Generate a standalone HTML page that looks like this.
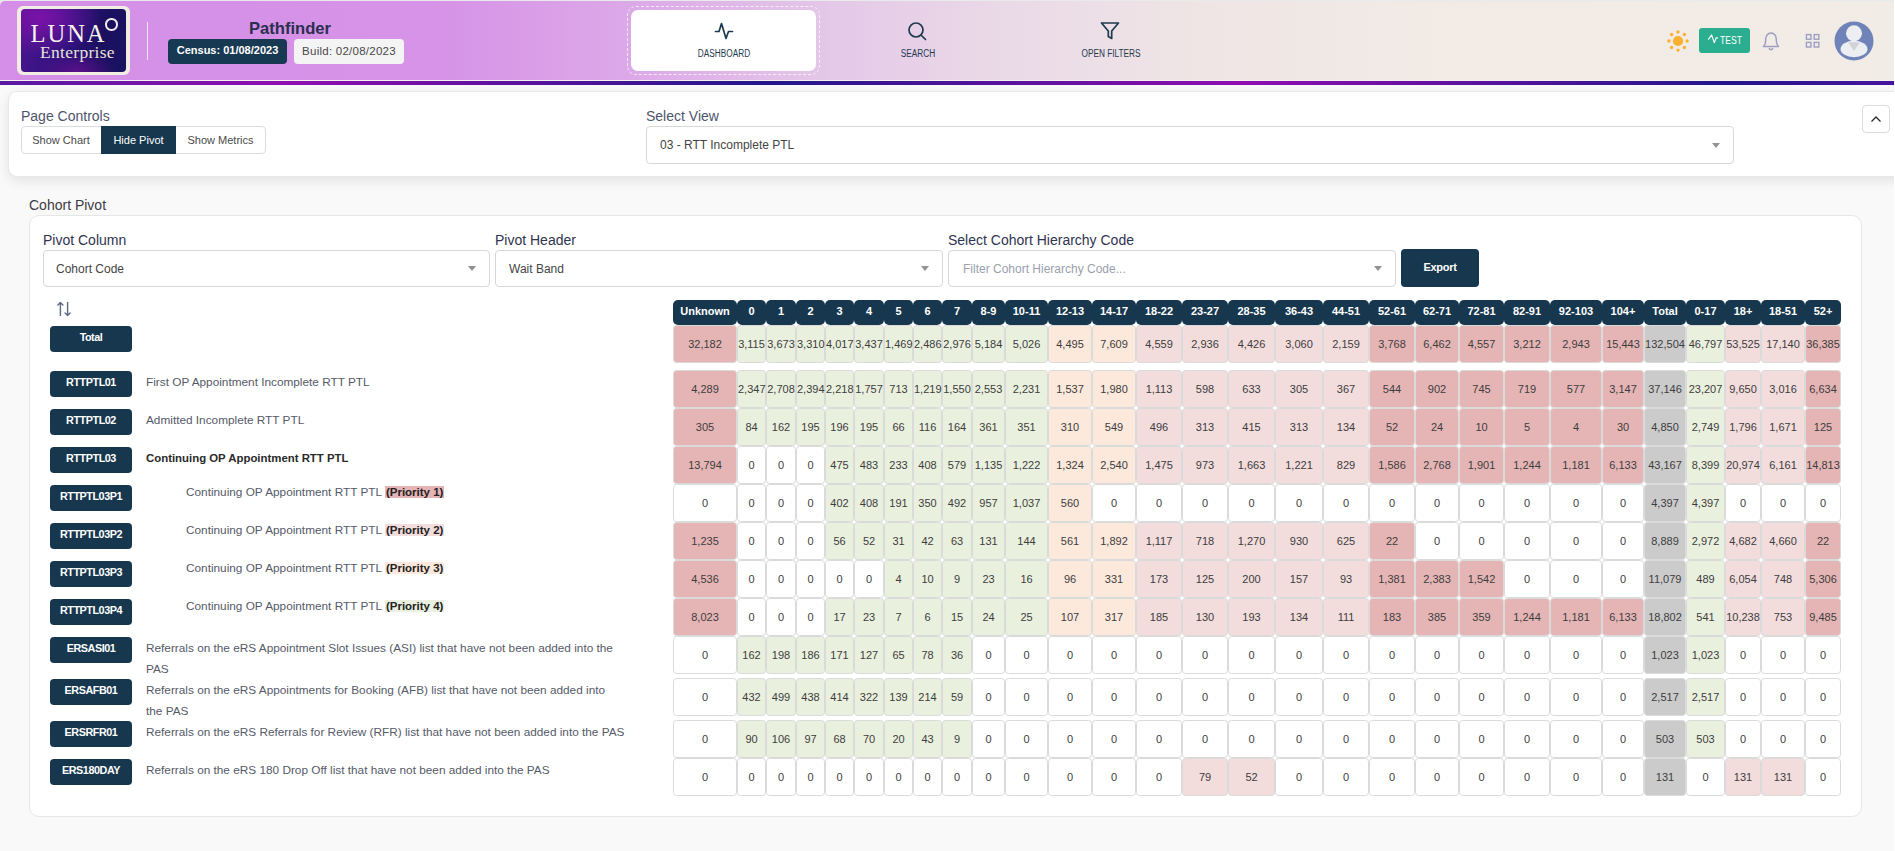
<!DOCTYPE html><html><head><meta charset="utf-8"><title>Pathfinder</title><style>
*{box-sizing:border-box;margin:0;padding:0}
html,body{width:1895px;height:851px;overflow:hidden}
body{background:#f9f9f9;font-family:"Liberation Sans",sans-serif;position:relative;color:#333}
.a{position:absolute}
#hdr{left:0;top:0;width:1894px;height:85px;background:#e9eaec}
#hbg{left:0;top:1px;width:1894px;height:79px;border-top-left-radius:5px;
 background:linear-gradient(90deg,#d48ee7 0px,#d794e7 450px,#dcaae8 640px,#e4c8e8 830px,#ead9e7 1000px,#efe5e5 1200px,#f1eae5 1400px,#f2ece6 1894px)}
#hline{left:0;top:80px;width:1894px;height:1px;background:#f6f2ee}
#hstrip{left:0;top:81px;width:1894px;height:4px;
 background:linear-gradient(90deg,#581aa2 0px,#900eb2 285px,#22168a 770px,#900eb2 1240px,#22168a 1725px,#4814a0 1894px)}
#rwhite{left:1894px;top:0;width:1px;height:851px;background:#fff}
.logo{left:17px;top:6px;width:113px;height:69px;border-radius:6px;background:#f2ede3}
.logoin{left:21px;top:9px;width:105px;height:63px;border-radius:4px;
 background:radial-gradient(ellipse 60px 40px at 20px 8px,#7a12a8 0%,rgba(122,18,168,0) 100%),
 radial-gradient(ellipse 40px 20px at 55px 62px,#5a108a 0%,rgba(90,16,138,0) 100%),
 linear-gradient(100deg,#4c1590 0%,#2a127a 45%,#1b1060 75%,#1a1260 100%)}
.luna{left:30.5px;top:19.4px;font-family:"Liberation Serif",serif;font-size:24.5px;color:#f6f1ea;letter-spacing:2px;line-height:30px}
.ent{left:40px;top:42.3px;font-family:"Liberation Serif",serif;font-size:17.5px;color:#eae0da;letter-spacing:0.3px;line-height:20px}
.ring{left:105px;top:18px;width:12.5px;height:12.5px;border:2px solid #f2ece6;border-radius:50%}
.vdiv{left:147px;top:22px;width:1px;height:38px;background:#f1e3f3}
.title{left:249px;top:18.7px;font-size:16.6px;font-weight:bold;color:#2b2f4f;line-height:20px}
.census{left:168px;top:39px;width:119px;height:25px;border-radius:4px;background:#173a52;color:#fff;font-size:11px;font-weight:bold;line-height:23.5px;text-align:center}
.build{left:294px;top:39px;width:110px;height:25px;border-radius:4px;background:#f4f4f4;color:#484848;font-size:11.5px;letter-spacing:0.25px;line-height:24.5px;text-align:center}
.navsel{left:627px;top:6px;width:193px;height:69px;border:1px dashed rgba(255,255,255,.7);border-radius:9px}
.navbox{left:631px;top:10px;width:185px;height:61px;background:#fff;border-radius:7px}
.navlbl{font-size:10px;color:#1d3a4e;line-height:12px;text-align:center;width:120px;transform:scaleX(.825)}
.ic{stroke:#1d3a4e;fill:none;stroke-width:1.7;stroke-linecap:round;stroke-linejoin:round}
.test{left:1699px;top:28px;width:51px;height:25px;border-radius:3px;background:#2aae8f;color:#fff;font-size:12px;line-height:25px}
.card{background:#fff;border-radius:9px}
.lbl{font-size:14px;color:#4e546c;line-height:16px}
.btng{left:21px;top:126px;height:28px;border:1px solid #dcdcdc;border-radius:4px;background:#fff}
.btn{top:126px;height:28px;font-size:11px;line-height:28px;text-align:center;color:#4a4a4a}
.sel{background:#fff;border:1px solid #d8d8d8;border-radius:4px;font-size:12px;color:#444}
.caret{width:0;height:0;border-left:4.5px solid transparent;border-right:4.5px solid transparent;border-top:5px solid #929292;margin-left:.8px;margin-top:.4px}
.cell{position:absolute;border:1px solid #dadada;border-radius:3.5px;font-size:11px;text-align:center;color:#3d3d3d;background:#fff;white-space:nowrap;overflow:visible}
.hc{position:absolute;top:300px;height:25px;border-radius:5px;background:#17374e;color:#fff;font-weight:bold;font-size:11px;line-height:23px;text-align:center;white-space:nowrap}
.r{background:#e5b5b5}.g{background:#eaf0de}.p{background:#fde9dc}.l{background:#f2dcdc}.t{background:#cbcbcb}.w{background:#fff}
.badge{position:absolute;left:50px;width:82px;height:26px;border-radius:4px;background:#17374e;color:#fff;font-size:10.8px;font-weight:bold;line-height:23px;text-align:center;letter-spacing:-0.45px}
.desc{position:absolute;font-size:11.8px;color:#555a68;line-height:21px;white-space:nowrap}
.hl{font-weight:bold;color:#222;padding:0 1px;font-size:11.5px}
</style></head><body>
<div id="hdr" class="a"></div><div id="hbg" class="a"></div><div id="hline" class="a"></div><div id="hstrip" class="a"></div>
<div class="a logo"></div><div class="a logoin"></div><div class="a luna">LUNA</div><div class="a ring"></div><div class="a ent">Enterprise</div>
<div class="a vdiv"></div>
<div class="a title">Pathfinder</div>
<div class="a census">Census: 01/08/2023</div><div class="a build">Build: 02/08/2023</div>
<div class="a navsel"></div><div class="a navbox"></div>
<svg class="a" style="left:714px;top:22px" width="20" height="18" viewBox="0 0 20 18"><path class="ic" d="M1.5 9.5h3.5l2.5-8 4.5 15 2.5-7h4"/></svg>
<div class="a navlbl" style="left:664px;top:47.6px">DASHBOARD</div>
<svg class="a" style="left:907px;top:21px" width="20" height="20" viewBox="0 0 20 20"><circle class="ic" cx="9" cy="9" r="7"/><path class="ic" d="M14 14l4.5 4.5"/></svg>
<div class="a navlbl" style="left:857.5px;top:47.6px">SEARCH</div>
<svg class="a" style="left:1100px;top:21px" width="20" height="20" viewBox="0 0 20 20"><path class="ic" d="M1.5 2h17l-6.8 8v7.5l-3.4-2v-5.5z"/></svg>
<div class="a navlbl" style="left:1050.5px;top:47.6px">OPEN FILTERS</div>
<svg class="a" style="left:1665px;top:27.6px" width="26" height="26" viewBox="0 0 26 26"><circle cx="13" cy="13" r="5.1" fill="#fbb02d"/><circle cx="13.00" cy="3.90" r="1.7" fill="#fbb02d"/><circle cx="19.43" cy="6.57" r="1.7" fill="#fbb02d"/><circle cx="22.10" cy="13.00" r="1.7" fill="#fbb02d"/><circle cx="19.43" cy="19.43" r="1.7" fill="#fbb02d"/><circle cx="13.00" cy="22.10" r="1.7" fill="#fbb02d"/><circle cx="6.57" cy="19.43" r="1.7" fill="#fbb02d"/><circle cx="3.90" cy="13.00" r="1.7" fill="#fbb02d"/><circle cx="6.57" cy="6.57" r="1.7" fill="#fbb02d"/></svg>
<div class="a test"><svg class="a" style="left:8.5px;top:5.5px" width="11" height="10" viewBox="0 0 11 10"><path d="M0.6 5.2L3.6 0.9 6.3 8.6 8.2 3.8H9.6" stroke="#fff" stroke-width="1.15" fill="none" stroke-linejoin="round" stroke-linecap="round"/></svg><span class="a" style="left:21px;top:0;font-size:10.8px;transform:scaleX(.8);transform-origin:0 0">TEST</span></div>
<svg class="a" style="left:1761px;top:30.6px" width="20" height="22" viewBox="0 0 20 22"><path d="M2.5 15.5h15c-1.6-1.6-2.2-3-2.2-6V8c0-3.3-2.3-6-5.3-6S4.7 4.700 4.700 8v1.5c0 3-.6 4.400-2.200 6z" stroke="#9c9fc2" stroke-width="1.5" fill="none" stroke-linejoin="round"/><path d="M8.300 17.600a1.800 1.700 0 0 0 3.400 0" stroke="#9c9fc2" stroke-width="1.5" fill="none" stroke-linecap="round"/></svg>
<svg class="a" style="left:1804px;top:32px" width="18" height="18" viewBox="0 0 18 18"><g stroke="#9c9fc2" stroke-width="1.4" fill="none"><rect x="2.4" y="2.6" width="4.6" height="4.6"/><rect x="10.2" y="2.6" width="4.6" height="4.6"/><rect x="2.4" y="10.4" width="4.6" height="4.6"/><rect x="10.2" y="10.4" width="4.6" height="4.6"/></g></svg>
<svg class="a" style="left:1834px;top:21px" width="40" height="40" viewBox="0 0 40 40"><defs><clipPath id="cc"><circle cx="20" cy="20" r="19.3"/></clipPath></defs><circle cx="20" cy="20" r="19.5" fill="#6f83b9"/><g clip-path="url(#cc)"><ellipse cx="20" cy="28" rx="13.5" ry="8.3" fill="#edeef2"/><path d="M14.1 21.2h11.8l-5.9 8.8z" fill="#d2d3d6"/><circle cx="20" cy="12.3" r="8" fill="#edeef2"/></g></svg>
<div class="a card" style="left:8px;top:91px;width:1900px;height:86px;border:1px solid #e8e8e8;box-shadow:0 4px 12px rgba(0,0,0,0.09)"></div>
<div class="a lbl" style="left:21px;top:108px">Page Controls</div>
<div class="a btng" style="width:245px"></div>
<div class="a btn" style="left:21px;width:80px">Show Chart</div>
<div class="a btn" style="left:101px;width:75px;background:#17374e;color:#fff">Hide Pivot</div>
<div class="a btn" style="left:176px;width:89px">Show Metrics</div>
<div class="a lbl" style="left:646px;top:108px">Select View</div>
<div class="a sel" style="left:646px;top:126px;width:1088px;height:38px"><span class="a" style="left:13px;top:11px">03 - RTT Incomplete PTL</span></div>
<div class="a caret" style="left:1711px;top:143px"></div>
<div class="a" style="left:1862px;top:105px;width:28px;height:28px;border:1px solid #dcdcdc;border-radius:4px;background:#fff"><svg class="a" style="left:6.5px;top:9px" width="12" height="8" viewBox="0 0 12 8"><path d="M1.5 6.5l4.5-4.5 4.5 4.5" stroke="#2a2a2a" stroke-width="1.25" fill="none"/></svg></div>
<div class="a" style="left:29px;top:197px;font-size:14px;color:#3c3c44;line-height:16px">Cohort Pivot</div>
<div class="a card" style="left:29px;top:215px;width:1833px;height:602px;border:1px solid #e6e6e6;border-radius:10px"></div>
<div class="a lbl" style="left:43px;top:232px;color:#2f3450">Pivot Column</div>
<div class="a sel" style="left:43px;top:250px;width:447px;height:37px"><span class="a" style="left:12px;top:11px">Cohort Code</span></div>
<div class="a caret" style="left:467px;top:266px"></div>
<div class="a lbl" style="left:495px;top:232px;color:#2f3450">Pivot Header</div>
<div class="a sel" style="left:495px;top:250px;width:448px;height:37px"><span class="a" style="left:13px;top:11px">Wait Band</span></div>
<div class="a caret" style="left:920px;top:266px"></div>
<div class="a lbl" style="left:948px;top:232px;color:#2f3450">Select Cohort Hierarchy Code</div>
<div class="a sel" style="left:948px;top:250px;width:448px;height:37px"><span class="a" style="left:14px;top:11px;color:#9aa0ae">Filter Cohort Hierarchy Code...</span></div>
<div class="a caret" style="left:1373px;top:266px"></div>
<div class="a" style="left:1401px;top:249px;width:78px;height:38px;border-radius:4px;background:#17374e;color:#fff;font-size:11px;font-weight:bold;letter-spacing:-0.3px;line-height:37px;text-align:center">Export</div>
<svg class="a" style="left:56px;top:301px" width="16" height="17" viewBox="0 0 16 17"><g stroke="#5b6a85" stroke-width="1.4" fill="none" stroke-linecap="round" stroke-linejoin="round"><path d="M4.4 14.4V1.4M1.9 3.9L4.4 1.4l2.5 2.5"/><path d="M11.6 1.5v13M9.1 12l2.5 2.5 2.5-2.5"/></g></svg>
<div class="hc" style="left:673px;width:64px">Unknown</div>
<div class="hc" style="left:737px;width:29px">0</div>
<div class="hc" style="left:766px;width:30px">1</div>
<div class="hc" style="left:796px;width:29px">2</div>
<div class="hc" style="left:825px;width:29px">3</div>
<div class="hc" style="left:854px;width:30px">4</div>
<div class="hc" style="left:884px;width:29px">5</div>
<div class="hc" style="left:913px;width:29px">6</div>
<div class="hc" style="left:942px;width:30px">7</div>
<div class="hc" style="left:972px;width:33px">8-9</div>
<div class="hc" style="left:1005px;width:43px">10-11</div>
<div class="hc" style="left:1048px;width:44px">12-13</div>
<div class="hc" style="left:1092px;width:44px">14-17</div>
<div class="hc" style="left:1136px;width:46px">18-22</div>
<div class="hc" style="left:1182px;width:46px">23-27</div>
<div class="hc" style="left:1228px;width:47px">28-35</div>
<div class="hc" style="left:1275px;width:48px">36-43</div>
<div class="hc" style="left:1323px;width:46px">44-51</div>
<div class="hc" style="left:1369px;width:46px">52-61</div>
<div class="hc" style="left:1415px;width:44px">62-71</div>
<div class="hc" style="left:1459px;width:45px">72-81</div>
<div class="hc" style="left:1504px;width:46px">82-91</div>
<div class="hc" style="left:1550px;width:52px">92-103</div>
<div class="hc" style="left:1602px;width:42px">104+</div>
<div class="hc" style="left:1644px;width:42px">Total</div>
<div class="hc" style="left:1686px;width:39px">0-17</div>
<div class="hc" style="left:1725px;width:36px">18+</div>
<div class="hc" style="left:1761px;width:44px">18-51</div>
<div class="hc" style="left:1805px;width:36px">52+</div>
<div class="cell r" style="left:673px;top:325.0px;width:64px;height:38.0px;line-height:36.0px">32,182</div>
<div class="cell g" style="left:737px;top:325.0px;width:29px;height:38.0px;line-height:36.0px">3,115</div>
<div class="cell g" style="left:766px;top:325.0px;width:30px;height:38.0px;line-height:36.0px">3,673</div>
<div class="cell g" style="left:796px;top:325.0px;width:29px;height:38.0px;line-height:36.0px">3,310</div>
<div class="cell g" style="left:825px;top:325.0px;width:29px;height:38.0px;line-height:36.0px">4,017</div>
<div class="cell g" style="left:854px;top:325.0px;width:30px;height:38.0px;line-height:36.0px">3,437</div>
<div class="cell g" style="left:884px;top:325.0px;width:29px;height:38.0px;line-height:36.0px">1,469</div>
<div class="cell g" style="left:913px;top:325.0px;width:29px;height:38.0px;line-height:36.0px">2,486</div>
<div class="cell g" style="left:942px;top:325.0px;width:30px;height:38.0px;line-height:36.0px">2,976</div>
<div class="cell g" style="left:972px;top:325.0px;width:33px;height:38.0px;line-height:36.0px">5,184</div>
<div class="cell g" style="left:1005px;top:325.0px;width:43px;height:38.0px;line-height:36.0px">5,026</div>
<div class="cell p" style="left:1048px;top:325.0px;width:44px;height:38.0px;line-height:36.0px">4,495</div>
<div class="cell p" style="left:1092px;top:325.0px;width:44px;height:38.0px;line-height:36.0px">7,609</div>
<div class="cell l" style="left:1136px;top:325.0px;width:46px;height:38.0px;line-height:36.0px">4,559</div>
<div class="cell l" style="left:1182px;top:325.0px;width:46px;height:38.0px;line-height:36.0px">2,936</div>
<div class="cell l" style="left:1228px;top:325.0px;width:47px;height:38.0px;line-height:36.0px">4,426</div>
<div class="cell l" style="left:1275px;top:325.0px;width:48px;height:38.0px;line-height:36.0px">3,060</div>
<div class="cell l" style="left:1323px;top:325.0px;width:46px;height:38.0px;line-height:36.0px">2,159</div>
<div class="cell r" style="left:1369px;top:325.0px;width:46px;height:38.0px;line-height:36.0px">3,768</div>
<div class="cell r" style="left:1415px;top:325.0px;width:44px;height:38.0px;line-height:36.0px">6,462</div>
<div class="cell r" style="left:1459px;top:325.0px;width:45px;height:38.0px;line-height:36.0px">4,557</div>
<div class="cell r" style="left:1504px;top:325.0px;width:46px;height:38.0px;line-height:36.0px">3,212</div>
<div class="cell r" style="left:1550px;top:325.0px;width:52px;height:38.0px;line-height:36.0px">2,943</div>
<div class="cell r" style="left:1602px;top:325.0px;width:42px;height:38.0px;line-height:36.0px">15,443</div>
<div class="cell t" style="left:1644px;top:325.0px;width:42px;height:38.0px;line-height:36.0px">132,504</div>
<div class="cell g" style="left:1686px;top:325.0px;width:39px;height:38.0px;line-height:36.0px">46,797</div>
<div class="cell l" style="left:1725px;top:325.0px;width:36px;height:38.0px;line-height:36.0px">53,525</div>
<div class="cell l" style="left:1761px;top:325.0px;width:44px;height:38.0px;line-height:36.0px">17,140</div>
<div class="cell r" style="left:1805px;top:325.0px;width:36px;height:38.0px;line-height:36.0px">36,385</div>
<div class="badge" style="top:326.0px">Total</div>
<div class="cell r" style="left:673px;top:370.0px;width:64px;height:38.0px;line-height:36.0px">4,289</div>
<div class="cell g" style="left:737px;top:370.0px;width:29px;height:38.0px;line-height:36.0px">2,347</div>
<div class="cell g" style="left:766px;top:370.0px;width:30px;height:38.0px;line-height:36.0px">2,708</div>
<div class="cell g" style="left:796px;top:370.0px;width:29px;height:38.0px;line-height:36.0px">2,394</div>
<div class="cell g" style="left:825px;top:370.0px;width:29px;height:38.0px;line-height:36.0px">2,218</div>
<div class="cell g" style="left:854px;top:370.0px;width:30px;height:38.0px;line-height:36.0px">1,757</div>
<div class="cell g" style="left:884px;top:370.0px;width:29px;height:38.0px;line-height:36.0px">713</div>
<div class="cell g" style="left:913px;top:370.0px;width:29px;height:38.0px;line-height:36.0px">1,219</div>
<div class="cell g" style="left:942px;top:370.0px;width:30px;height:38.0px;line-height:36.0px">1,550</div>
<div class="cell g" style="left:972px;top:370.0px;width:33px;height:38.0px;line-height:36.0px">2,553</div>
<div class="cell g" style="left:1005px;top:370.0px;width:43px;height:38.0px;line-height:36.0px">2,231</div>
<div class="cell p" style="left:1048px;top:370.0px;width:44px;height:38.0px;line-height:36.0px">1,537</div>
<div class="cell p" style="left:1092px;top:370.0px;width:44px;height:38.0px;line-height:36.0px">1,980</div>
<div class="cell l" style="left:1136px;top:370.0px;width:46px;height:38.0px;line-height:36.0px">1,113</div>
<div class="cell l" style="left:1182px;top:370.0px;width:46px;height:38.0px;line-height:36.0px">598</div>
<div class="cell l" style="left:1228px;top:370.0px;width:47px;height:38.0px;line-height:36.0px">633</div>
<div class="cell l" style="left:1275px;top:370.0px;width:48px;height:38.0px;line-height:36.0px">305</div>
<div class="cell l" style="left:1323px;top:370.0px;width:46px;height:38.0px;line-height:36.0px">367</div>
<div class="cell r" style="left:1369px;top:370.0px;width:46px;height:38.0px;line-height:36.0px">544</div>
<div class="cell r" style="left:1415px;top:370.0px;width:44px;height:38.0px;line-height:36.0px">902</div>
<div class="cell r" style="left:1459px;top:370.0px;width:45px;height:38.0px;line-height:36.0px">745</div>
<div class="cell r" style="left:1504px;top:370.0px;width:46px;height:38.0px;line-height:36.0px">719</div>
<div class="cell r" style="left:1550px;top:370.0px;width:52px;height:38.0px;line-height:36.0px">577</div>
<div class="cell r" style="left:1602px;top:370.0px;width:42px;height:38.0px;line-height:36.0px">3,147</div>
<div class="cell t" style="left:1644px;top:370.0px;width:42px;height:38.0px;line-height:36.0px">37,146</div>
<div class="cell g" style="left:1686px;top:370.0px;width:39px;height:38.0px;line-height:36.0px">23,207</div>
<div class="cell l" style="left:1725px;top:370.0px;width:36px;height:38.0px;line-height:36.0px">9,650</div>
<div class="cell l" style="left:1761px;top:370.0px;width:44px;height:38.0px;line-height:36.0px">3,016</div>
<div class="cell r" style="left:1805px;top:370.0px;width:36px;height:38.0px;line-height:36.0px">6,634</div>
<div class="badge" style="top:371.0px">RTTPTL01</div>
<div class="desc" style="left:146px;top:372.0px">First OP Appointment Incomplete RTT PTL</div>
<div class="cell r" style="left:673px;top:408.0px;width:64px;height:38.0px;line-height:36.0px">305</div>
<div class="cell g" style="left:737px;top:408.0px;width:29px;height:38.0px;line-height:36.0px">84</div>
<div class="cell g" style="left:766px;top:408.0px;width:30px;height:38.0px;line-height:36.0px">162</div>
<div class="cell g" style="left:796px;top:408.0px;width:29px;height:38.0px;line-height:36.0px">195</div>
<div class="cell g" style="left:825px;top:408.0px;width:29px;height:38.0px;line-height:36.0px">196</div>
<div class="cell g" style="left:854px;top:408.0px;width:30px;height:38.0px;line-height:36.0px">195</div>
<div class="cell g" style="left:884px;top:408.0px;width:29px;height:38.0px;line-height:36.0px">66</div>
<div class="cell g" style="left:913px;top:408.0px;width:29px;height:38.0px;line-height:36.0px">116</div>
<div class="cell g" style="left:942px;top:408.0px;width:30px;height:38.0px;line-height:36.0px">164</div>
<div class="cell g" style="left:972px;top:408.0px;width:33px;height:38.0px;line-height:36.0px">361</div>
<div class="cell g" style="left:1005px;top:408.0px;width:43px;height:38.0px;line-height:36.0px">351</div>
<div class="cell p" style="left:1048px;top:408.0px;width:44px;height:38.0px;line-height:36.0px">310</div>
<div class="cell p" style="left:1092px;top:408.0px;width:44px;height:38.0px;line-height:36.0px">549</div>
<div class="cell l" style="left:1136px;top:408.0px;width:46px;height:38.0px;line-height:36.0px">496</div>
<div class="cell l" style="left:1182px;top:408.0px;width:46px;height:38.0px;line-height:36.0px">313</div>
<div class="cell l" style="left:1228px;top:408.0px;width:47px;height:38.0px;line-height:36.0px">415</div>
<div class="cell l" style="left:1275px;top:408.0px;width:48px;height:38.0px;line-height:36.0px">313</div>
<div class="cell l" style="left:1323px;top:408.0px;width:46px;height:38.0px;line-height:36.0px">134</div>
<div class="cell r" style="left:1369px;top:408.0px;width:46px;height:38.0px;line-height:36.0px">52</div>
<div class="cell r" style="left:1415px;top:408.0px;width:44px;height:38.0px;line-height:36.0px">24</div>
<div class="cell r" style="left:1459px;top:408.0px;width:45px;height:38.0px;line-height:36.0px">10</div>
<div class="cell r" style="left:1504px;top:408.0px;width:46px;height:38.0px;line-height:36.0px">5</div>
<div class="cell r" style="left:1550px;top:408.0px;width:52px;height:38.0px;line-height:36.0px">4</div>
<div class="cell r" style="left:1602px;top:408.0px;width:42px;height:38.0px;line-height:36.0px">30</div>
<div class="cell t" style="left:1644px;top:408.0px;width:42px;height:38.0px;line-height:36.0px">4,850</div>
<div class="cell g" style="left:1686px;top:408.0px;width:39px;height:38.0px;line-height:36.0px">2,749</div>
<div class="cell l" style="left:1725px;top:408.0px;width:36px;height:38.0px;line-height:36.0px">1,796</div>
<div class="cell l" style="left:1761px;top:408.0px;width:44px;height:38.0px;line-height:36.0px">1,671</div>
<div class="cell r" style="left:1805px;top:408.0px;width:36px;height:38.0px;line-height:36.0px">125</div>
<div class="badge" style="top:409.0px">RTTPTL02</div>
<div class="desc" style="left:146px;top:410.0px">Admitted Incomplete RTT PTL</div>
<div class="cell r" style="left:673px;top:446.0px;width:64px;height:38.0px;line-height:36.0px">13,794</div>
<div class="cell w" style="left:737px;top:446.0px;width:29px;height:38.0px;line-height:36.0px">0</div>
<div class="cell w" style="left:766px;top:446.0px;width:30px;height:38.0px;line-height:36.0px">0</div>
<div class="cell w" style="left:796px;top:446.0px;width:29px;height:38.0px;line-height:36.0px">0</div>
<div class="cell g" style="left:825px;top:446.0px;width:29px;height:38.0px;line-height:36.0px">475</div>
<div class="cell g" style="left:854px;top:446.0px;width:30px;height:38.0px;line-height:36.0px">483</div>
<div class="cell g" style="left:884px;top:446.0px;width:29px;height:38.0px;line-height:36.0px">233</div>
<div class="cell g" style="left:913px;top:446.0px;width:29px;height:38.0px;line-height:36.0px">408</div>
<div class="cell g" style="left:942px;top:446.0px;width:30px;height:38.0px;line-height:36.0px">579</div>
<div class="cell g" style="left:972px;top:446.0px;width:33px;height:38.0px;line-height:36.0px">1,135</div>
<div class="cell g" style="left:1005px;top:446.0px;width:43px;height:38.0px;line-height:36.0px">1,222</div>
<div class="cell p" style="left:1048px;top:446.0px;width:44px;height:38.0px;line-height:36.0px">1,324</div>
<div class="cell p" style="left:1092px;top:446.0px;width:44px;height:38.0px;line-height:36.0px">2,540</div>
<div class="cell l" style="left:1136px;top:446.0px;width:46px;height:38.0px;line-height:36.0px">1,475</div>
<div class="cell l" style="left:1182px;top:446.0px;width:46px;height:38.0px;line-height:36.0px">973</div>
<div class="cell l" style="left:1228px;top:446.0px;width:47px;height:38.0px;line-height:36.0px">1,663</div>
<div class="cell l" style="left:1275px;top:446.0px;width:48px;height:38.0px;line-height:36.0px">1,221</div>
<div class="cell l" style="left:1323px;top:446.0px;width:46px;height:38.0px;line-height:36.0px">829</div>
<div class="cell r" style="left:1369px;top:446.0px;width:46px;height:38.0px;line-height:36.0px">1,586</div>
<div class="cell r" style="left:1415px;top:446.0px;width:44px;height:38.0px;line-height:36.0px">2,768</div>
<div class="cell r" style="left:1459px;top:446.0px;width:45px;height:38.0px;line-height:36.0px">1,901</div>
<div class="cell r" style="left:1504px;top:446.0px;width:46px;height:38.0px;line-height:36.0px">1,244</div>
<div class="cell r" style="left:1550px;top:446.0px;width:52px;height:38.0px;line-height:36.0px">1,181</div>
<div class="cell r" style="left:1602px;top:446.0px;width:42px;height:38.0px;line-height:36.0px">6,133</div>
<div class="cell t" style="left:1644px;top:446.0px;width:42px;height:38.0px;line-height:36.0px">43,167</div>
<div class="cell g" style="left:1686px;top:446.0px;width:39px;height:38.0px;line-height:36.0px">8,399</div>
<div class="cell l" style="left:1725px;top:446.0px;width:36px;height:38.0px;line-height:36.0px">20,974</div>
<div class="cell l" style="left:1761px;top:446.0px;width:44px;height:38.0px;line-height:36.0px">6,161</div>
<div class="cell r" style="left:1805px;top:446.0px;width:36px;height:38.0px;line-height:36.0px">14,813</div>
<div class="badge" style="top:447.0px">RTTPTL03</div>
<div class="desc" style="left:146px;top:448.0px;font-weight:bold;color:#2a2a2a;font-size:11.4px">Continuing OP Appointment RTT PTL</div>
<div class="cell w" style="left:673px;top:484.0px;width:64px;height:38.0px;line-height:36.0px">0</div>
<div class="cell w" style="left:737px;top:484.0px;width:29px;height:38.0px;line-height:36.0px">0</div>
<div class="cell w" style="left:766px;top:484.0px;width:30px;height:38.0px;line-height:36.0px">0</div>
<div class="cell w" style="left:796px;top:484.0px;width:29px;height:38.0px;line-height:36.0px">0</div>
<div class="cell g" style="left:825px;top:484.0px;width:29px;height:38.0px;line-height:36.0px">402</div>
<div class="cell g" style="left:854px;top:484.0px;width:30px;height:38.0px;line-height:36.0px">408</div>
<div class="cell g" style="left:884px;top:484.0px;width:29px;height:38.0px;line-height:36.0px">191</div>
<div class="cell g" style="left:913px;top:484.0px;width:29px;height:38.0px;line-height:36.0px">350</div>
<div class="cell g" style="left:942px;top:484.0px;width:30px;height:38.0px;line-height:36.0px">492</div>
<div class="cell g" style="left:972px;top:484.0px;width:33px;height:38.0px;line-height:36.0px">957</div>
<div class="cell g" style="left:1005px;top:484.0px;width:43px;height:38.0px;line-height:36.0px">1,037</div>
<div class="cell p" style="left:1048px;top:484.0px;width:44px;height:38.0px;line-height:36.0px">560</div>
<div class="cell w" style="left:1092px;top:484.0px;width:44px;height:38.0px;line-height:36.0px">0</div>
<div class="cell w" style="left:1136px;top:484.0px;width:46px;height:38.0px;line-height:36.0px">0</div>
<div class="cell w" style="left:1182px;top:484.0px;width:46px;height:38.0px;line-height:36.0px">0</div>
<div class="cell w" style="left:1228px;top:484.0px;width:47px;height:38.0px;line-height:36.0px">0</div>
<div class="cell w" style="left:1275px;top:484.0px;width:48px;height:38.0px;line-height:36.0px">0</div>
<div class="cell w" style="left:1323px;top:484.0px;width:46px;height:38.0px;line-height:36.0px">0</div>
<div class="cell w" style="left:1369px;top:484.0px;width:46px;height:38.0px;line-height:36.0px">0</div>
<div class="cell w" style="left:1415px;top:484.0px;width:44px;height:38.0px;line-height:36.0px">0</div>
<div class="cell w" style="left:1459px;top:484.0px;width:45px;height:38.0px;line-height:36.0px">0</div>
<div class="cell w" style="left:1504px;top:484.0px;width:46px;height:38.0px;line-height:36.0px">0</div>
<div class="cell w" style="left:1550px;top:484.0px;width:52px;height:38.0px;line-height:36.0px">0</div>
<div class="cell w" style="left:1602px;top:484.0px;width:42px;height:38.0px;line-height:36.0px">0</div>
<div class="cell t" style="left:1644px;top:484.0px;width:42px;height:38.0px;line-height:36.0px">4,397</div>
<div class="cell g" style="left:1686px;top:484.0px;width:39px;height:38.0px;line-height:36.0px">4,397</div>
<div class="cell w" style="left:1725px;top:484.0px;width:36px;height:38.0px;line-height:36.0px">0</div>
<div class="cell w" style="left:1761px;top:484.0px;width:44px;height:38.0px;line-height:36.0px">0</div>
<div class="cell w" style="left:1805px;top:484.0px;width:36px;height:38.0px;line-height:36.0px">0</div>
<div class="badge" style="top:485.0px">RTTPTL03P1</div>
<div class="desc" style="left:186px;top:482.0px">Continuing OP Appointment RTT PTL <span class="hl" style="background:#e5b4b4">(Priority 1)</span></div>
<div class="cell r" style="left:673px;top:522.0px;width:64px;height:38.0px;line-height:36.0px">1,235</div>
<div class="cell w" style="left:737px;top:522.0px;width:29px;height:38.0px;line-height:36.0px">0</div>
<div class="cell w" style="left:766px;top:522.0px;width:30px;height:38.0px;line-height:36.0px">0</div>
<div class="cell w" style="left:796px;top:522.0px;width:29px;height:38.0px;line-height:36.0px">0</div>
<div class="cell g" style="left:825px;top:522.0px;width:29px;height:38.0px;line-height:36.0px">56</div>
<div class="cell g" style="left:854px;top:522.0px;width:30px;height:38.0px;line-height:36.0px">52</div>
<div class="cell g" style="left:884px;top:522.0px;width:29px;height:38.0px;line-height:36.0px">31</div>
<div class="cell g" style="left:913px;top:522.0px;width:29px;height:38.0px;line-height:36.0px">42</div>
<div class="cell g" style="left:942px;top:522.0px;width:30px;height:38.0px;line-height:36.0px">63</div>
<div class="cell g" style="left:972px;top:522.0px;width:33px;height:38.0px;line-height:36.0px">131</div>
<div class="cell g" style="left:1005px;top:522.0px;width:43px;height:38.0px;line-height:36.0px">144</div>
<div class="cell p" style="left:1048px;top:522.0px;width:44px;height:38.0px;line-height:36.0px">561</div>
<div class="cell p" style="left:1092px;top:522.0px;width:44px;height:38.0px;line-height:36.0px">1,892</div>
<div class="cell l" style="left:1136px;top:522.0px;width:46px;height:38.0px;line-height:36.0px">1,117</div>
<div class="cell l" style="left:1182px;top:522.0px;width:46px;height:38.0px;line-height:36.0px">718</div>
<div class="cell l" style="left:1228px;top:522.0px;width:47px;height:38.0px;line-height:36.0px">1,270</div>
<div class="cell l" style="left:1275px;top:522.0px;width:48px;height:38.0px;line-height:36.0px">930</div>
<div class="cell l" style="left:1323px;top:522.0px;width:46px;height:38.0px;line-height:36.0px">625</div>
<div class="cell r" style="left:1369px;top:522.0px;width:46px;height:38.0px;line-height:36.0px">22</div>
<div class="cell w" style="left:1415px;top:522.0px;width:44px;height:38.0px;line-height:36.0px">0</div>
<div class="cell w" style="left:1459px;top:522.0px;width:45px;height:38.0px;line-height:36.0px">0</div>
<div class="cell w" style="left:1504px;top:522.0px;width:46px;height:38.0px;line-height:36.0px">0</div>
<div class="cell w" style="left:1550px;top:522.0px;width:52px;height:38.0px;line-height:36.0px">0</div>
<div class="cell w" style="left:1602px;top:522.0px;width:42px;height:38.0px;line-height:36.0px">0</div>
<div class="cell t" style="left:1644px;top:522.0px;width:42px;height:38.0px;line-height:36.0px">8,889</div>
<div class="cell g" style="left:1686px;top:522.0px;width:39px;height:38.0px;line-height:36.0px">2,972</div>
<div class="cell l" style="left:1725px;top:522.0px;width:36px;height:38.0px;line-height:36.0px">4,682</div>
<div class="cell l" style="left:1761px;top:522.0px;width:44px;height:38.0px;line-height:36.0px">4,660</div>
<div class="cell r" style="left:1805px;top:522.0px;width:36px;height:38.0px;line-height:36.0px">22</div>
<div class="badge" style="top:523.0px">RTTPTL03P2</div>
<div class="desc" style="left:186px;top:520.0px">Continuing OP Appointment RTT PTL <span class="hl" style="background:#f2dcdc">(Priority 2)</span></div>
<div class="cell r" style="left:673px;top:560.0px;width:64px;height:38.0px;line-height:36.0px">4,536</div>
<div class="cell w" style="left:737px;top:560.0px;width:29px;height:38.0px;line-height:36.0px">0</div>
<div class="cell w" style="left:766px;top:560.0px;width:30px;height:38.0px;line-height:36.0px">0</div>
<div class="cell w" style="left:796px;top:560.0px;width:29px;height:38.0px;line-height:36.0px">0</div>
<div class="cell w" style="left:825px;top:560.0px;width:29px;height:38.0px;line-height:36.0px">0</div>
<div class="cell w" style="left:854px;top:560.0px;width:30px;height:38.0px;line-height:36.0px">0</div>
<div class="cell g" style="left:884px;top:560.0px;width:29px;height:38.0px;line-height:36.0px">4</div>
<div class="cell g" style="left:913px;top:560.0px;width:29px;height:38.0px;line-height:36.0px">10</div>
<div class="cell g" style="left:942px;top:560.0px;width:30px;height:38.0px;line-height:36.0px">9</div>
<div class="cell g" style="left:972px;top:560.0px;width:33px;height:38.0px;line-height:36.0px">23</div>
<div class="cell g" style="left:1005px;top:560.0px;width:43px;height:38.0px;line-height:36.0px">16</div>
<div class="cell p" style="left:1048px;top:560.0px;width:44px;height:38.0px;line-height:36.0px">96</div>
<div class="cell p" style="left:1092px;top:560.0px;width:44px;height:38.0px;line-height:36.0px">331</div>
<div class="cell l" style="left:1136px;top:560.0px;width:46px;height:38.0px;line-height:36.0px">173</div>
<div class="cell l" style="left:1182px;top:560.0px;width:46px;height:38.0px;line-height:36.0px">125</div>
<div class="cell l" style="left:1228px;top:560.0px;width:47px;height:38.0px;line-height:36.0px">200</div>
<div class="cell l" style="left:1275px;top:560.0px;width:48px;height:38.0px;line-height:36.0px">157</div>
<div class="cell l" style="left:1323px;top:560.0px;width:46px;height:38.0px;line-height:36.0px">93</div>
<div class="cell r" style="left:1369px;top:560.0px;width:46px;height:38.0px;line-height:36.0px">1,381</div>
<div class="cell r" style="left:1415px;top:560.0px;width:44px;height:38.0px;line-height:36.0px">2,383</div>
<div class="cell r" style="left:1459px;top:560.0px;width:45px;height:38.0px;line-height:36.0px">1,542</div>
<div class="cell w" style="left:1504px;top:560.0px;width:46px;height:38.0px;line-height:36.0px">0</div>
<div class="cell w" style="left:1550px;top:560.0px;width:52px;height:38.0px;line-height:36.0px">0</div>
<div class="cell w" style="left:1602px;top:560.0px;width:42px;height:38.0px;line-height:36.0px">0</div>
<div class="cell t" style="left:1644px;top:560.0px;width:42px;height:38.0px;line-height:36.0px">11,079</div>
<div class="cell g" style="left:1686px;top:560.0px;width:39px;height:38.0px;line-height:36.0px">489</div>
<div class="cell l" style="left:1725px;top:560.0px;width:36px;height:38.0px;line-height:36.0px">6,054</div>
<div class="cell l" style="left:1761px;top:560.0px;width:44px;height:38.0px;line-height:36.0px">748</div>
<div class="cell r" style="left:1805px;top:560.0px;width:36px;height:38.0px;line-height:36.0px">5,306</div>
<div class="badge" style="top:561.0px">RTTPTL03P3</div>
<div class="desc" style="left:186px;top:558.0px">Continuing OP Appointment RTT PTL <span class="hl" style="background:#fce8dc">(Priority 3)</span></div>
<div class="cell r" style="left:673px;top:598.0px;width:64px;height:38.0px;line-height:36.0px">8,023</div>
<div class="cell w" style="left:737px;top:598.0px;width:29px;height:38.0px;line-height:36.0px">0</div>
<div class="cell w" style="left:766px;top:598.0px;width:30px;height:38.0px;line-height:36.0px">0</div>
<div class="cell w" style="left:796px;top:598.0px;width:29px;height:38.0px;line-height:36.0px">0</div>
<div class="cell g" style="left:825px;top:598.0px;width:29px;height:38.0px;line-height:36.0px">17</div>
<div class="cell g" style="left:854px;top:598.0px;width:30px;height:38.0px;line-height:36.0px">23</div>
<div class="cell g" style="left:884px;top:598.0px;width:29px;height:38.0px;line-height:36.0px">7</div>
<div class="cell g" style="left:913px;top:598.0px;width:29px;height:38.0px;line-height:36.0px">6</div>
<div class="cell g" style="left:942px;top:598.0px;width:30px;height:38.0px;line-height:36.0px">15</div>
<div class="cell g" style="left:972px;top:598.0px;width:33px;height:38.0px;line-height:36.0px">24</div>
<div class="cell g" style="left:1005px;top:598.0px;width:43px;height:38.0px;line-height:36.0px">25</div>
<div class="cell p" style="left:1048px;top:598.0px;width:44px;height:38.0px;line-height:36.0px">107</div>
<div class="cell p" style="left:1092px;top:598.0px;width:44px;height:38.0px;line-height:36.0px">317</div>
<div class="cell l" style="left:1136px;top:598.0px;width:46px;height:38.0px;line-height:36.0px">185</div>
<div class="cell l" style="left:1182px;top:598.0px;width:46px;height:38.0px;line-height:36.0px">130</div>
<div class="cell l" style="left:1228px;top:598.0px;width:47px;height:38.0px;line-height:36.0px">193</div>
<div class="cell l" style="left:1275px;top:598.0px;width:48px;height:38.0px;line-height:36.0px">134</div>
<div class="cell l" style="left:1323px;top:598.0px;width:46px;height:38.0px;line-height:36.0px">111</div>
<div class="cell r" style="left:1369px;top:598.0px;width:46px;height:38.0px;line-height:36.0px">183</div>
<div class="cell r" style="left:1415px;top:598.0px;width:44px;height:38.0px;line-height:36.0px">385</div>
<div class="cell r" style="left:1459px;top:598.0px;width:45px;height:38.0px;line-height:36.0px">359</div>
<div class="cell r" style="left:1504px;top:598.0px;width:46px;height:38.0px;line-height:36.0px">1,244</div>
<div class="cell r" style="left:1550px;top:598.0px;width:52px;height:38.0px;line-height:36.0px">1,181</div>
<div class="cell r" style="left:1602px;top:598.0px;width:42px;height:38.0px;line-height:36.0px">6,133</div>
<div class="cell t" style="left:1644px;top:598.0px;width:42px;height:38.0px;line-height:36.0px">18,802</div>
<div class="cell g" style="left:1686px;top:598.0px;width:39px;height:38.0px;line-height:36.0px">541</div>
<div class="cell l" style="left:1725px;top:598.0px;width:36px;height:38.0px;line-height:36.0px">10,238</div>
<div class="cell l" style="left:1761px;top:598.0px;width:44px;height:38.0px;line-height:36.0px">753</div>
<div class="cell r" style="left:1805px;top:598.0px;width:36px;height:38.0px;line-height:36.0px">9,485</div>
<div class="badge" style="top:599.0px">RTTPTL03P4</div>
<div class="desc" style="left:186px;top:596.0px">Continuing OP Appointment RTT PTL <span class="hl" style="background:#e9f0df">(Priority 4)</span></div>
<div class="cell w" style="left:673px;top:636.0px;width:64px;height:38.0px;line-height:36.0px">0</div>
<div class="cell g" style="left:737px;top:636.0px;width:29px;height:38.0px;line-height:36.0px">162</div>
<div class="cell g" style="left:766px;top:636.0px;width:30px;height:38.0px;line-height:36.0px">198</div>
<div class="cell g" style="left:796px;top:636.0px;width:29px;height:38.0px;line-height:36.0px">186</div>
<div class="cell g" style="left:825px;top:636.0px;width:29px;height:38.0px;line-height:36.0px">171</div>
<div class="cell g" style="left:854px;top:636.0px;width:30px;height:38.0px;line-height:36.0px">127</div>
<div class="cell g" style="left:884px;top:636.0px;width:29px;height:38.0px;line-height:36.0px">65</div>
<div class="cell g" style="left:913px;top:636.0px;width:29px;height:38.0px;line-height:36.0px">78</div>
<div class="cell g" style="left:942px;top:636.0px;width:30px;height:38.0px;line-height:36.0px">36</div>
<div class="cell w" style="left:972px;top:636.0px;width:33px;height:38.0px;line-height:36.0px">0</div>
<div class="cell w" style="left:1005px;top:636.0px;width:43px;height:38.0px;line-height:36.0px">0</div>
<div class="cell w" style="left:1048px;top:636.0px;width:44px;height:38.0px;line-height:36.0px">0</div>
<div class="cell w" style="left:1092px;top:636.0px;width:44px;height:38.0px;line-height:36.0px">0</div>
<div class="cell w" style="left:1136px;top:636.0px;width:46px;height:38.0px;line-height:36.0px">0</div>
<div class="cell w" style="left:1182px;top:636.0px;width:46px;height:38.0px;line-height:36.0px">0</div>
<div class="cell w" style="left:1228px;top:636.0px;width:47px;height:38.0px;line-height:36.0px">0</div>
<div class="cell w" style="left:1275px;top:636.0px;width:48px;height:38.0px;line-height:36.0px">0</div>
<div class="cell w" style="left:1323px;top:636.0px;width:46px;height:38.0px;line-height:36.0px">0</div>
<div class="cell w" style="left:1369px;top:636.0px;width:46px;height:38.0px;line-height:36.0px">0</div>
<div class="cell w" style="left:1415px;top:636.0px;width:44px;height:38.0px;line-height:36.0px">0</div>
<div class="cell w" style="left:1459px;top:636.0px;width:45px;height:38.0px;line-height:36.0px">0</div>
<div class="cell w" style="left:1504px;top:636.0px;width:46px;height:38.0px;line-height:36.0px">0</div>
<div class="cell w" style="left:1550px;top:636.0px;width:52px;height:38.0px;line-height:36.0px">0</div>
<div class="cell w" style="left:1602px;top:636.0px;width:42px;height:38.0px;line-height:36.0px">0</div>
<div class="cell t" style="left:1644px;top:636.0px;width:42px;height:38.0px;line-height:36.0px">1,023</div>
<div class="cell g" style="left:1686px;top:636.0px;width:39px;height:38.0px;line-height:36.0px">1,023</div>
<div class="cell w" style="left:1725px;top:636.0px;width:36px;height:38.0px;line-height:36.0px">0</div>
<div class="cell w" style="left:1761px;top:636.0px;width:44px;height:38.0px;line-height:36.0px">0</div>
<div class="cell w" style="left:1805px;top:636.0px;width:36px;height:38.0px;line-height:36.0px">0</div>
<div class="badge" style="top:637.0px">ERSASI01</div>
<div class="desc" style="left:146px;top:638.0px">Referrals on the eRS Appointment Slot Issues (ASI) list that have not been added into the<br>PAS</div>
<div class="cell w" style="left:673px;top:678.0px;width:64px;height:38.0px;line-height:36.0px">0</div>
<div class="cell g" style="left:737px;top:678.0px;width:29px;height:38.0px;line-height:36.0px">432</div>
<div class="cell g" style="left:766px;top:678.0px;width:30px;height:38.0px;line-height:36.0px">499</div>
<div class="cell g" style="left:796px;top:678.0px;width:29px;height:38.0px;line-height:36.0px">438</div>
<div class="cell g" style="left:825px;top:678.0px;width:29px;height:38.0px;line-height:36.0px">414</div>
<div class="cell g" style="left:854px;top:678.0px;width:30px;height:38.0px;line-height:36.0px">322</div>
<div class="cell g" style="left:884px;top:678.0px;width:29px;height:38.0px;line-height:36.0px">139</div>
<div class="cell g" style="left:913px;top:678.0px;width:29px;height:38.0px;line-height:36.0px">214</div>
<div class="cell g" style="left:942px;top:678.0px;width:30px;height:38.0px;line-height:36.0px">59</div>
<div class="cell w" style="left:972px;top:678.0px;width:33px;height:38.0px;line-height:36.0px">0</div>
<div class="cell w" style="left:1005px;top:678.0px;width:43px;height:38.0px;line-height:36.0px">0</div>
<div class="cell w" style="left:1048px;top:678.0px;width:44px;height:38.0px;line-height:36.0px">0</div>
<div class="cell w" style="left:1092px;top:678.0px;width:44px;height:38.0px;line-height:36.0px">0</div>
<div class="cell w" style="left:1136px;top:678.0px;width:46px;height:38.0px;line-height:36.0px">0</div>
<div class="cell w" style="left:1182px;top:678.0px;width:46px;height:38.0px;line-height:36.0px">0</div>
<div class="cell w" style="left:1228px;top:678.0px;width:47px;height:38.0px;line-height:36.0px">0</div>
<div class="cell w" style="left:1275px;top:678.0px;width:48px;height:38.0px;line-height:36.0px">0</div>
<div class="cell w" style="left:1323px;top:678.0px;width:46px;height:38.0px;line-height:36.0px">0</div>
<div class="cell w" style="left:1369px;top:678.0px;width:46px;height:38.0px;line-height:36.0px">0</div>
<div class="cell w" style="left:1415px;top:678.0px;width:44px;height:38.0px;line-height:36.0px">0</div>
<div class="cell w" style="left:1459px;top:678.0px;width:45px;height:38.0px;line-height:36.0px">0</div>
<div class="cell w" style="left:1504px;top:678.0px;width:46px;height:38.0px;line-height:36.0px">0</div>
<div class="cell w" style="left:1550px;top:678.0px;width:52px;height:38.0px;line-height:36.0px">0</div>
<div class="cell w" style="left:1602px;top:678.0px;width:42px;height:38.0px;line-height:36.0px">0</div>
<div class="cell t" style="left:1644px;top:678.0px;width:42px;height:38.0px;line-height:36.0px">2,517</div>
<div class="cell g" style="left:1686px;top:678.0px;width:39px;height:38.0px;line-height:36.0px">2,517</div>
<div class="cell w" style="left:1725px;top:678.0px;width:36px;height:38.0px;line-height:36.0px">0</div>
<div class="cell w" style="left:1761px;top:678.0px;width:44px;height:38.0px;line-height:36.0px">0</div>
<div class="cell w" style="left:1805px;top:678.0px;width:36px;height:38.0px;line-height:36.0px">0</div>
<div class="badge" style="top:679.0px">ERSAFB01</div>
<div class="desc" style="left:146px;top:680.0px">Referrals on the eRS Appointments for Booking (AFB) list that have not been added into<br>the PAS</div>
<div class="cell w" style="left:673px;top:720.0px;width:64px;height:38.0px;line-height:36.0px">0</div>
<div class="cell g" style="left:737px;top:720.0px;width:29px;height:38.0px;line-height:36.0px">90</div>
<div class="cell g" style="left:766px;top:720.0px;width:30px;height:38.0px;line-height:36.0px">106</div>
<div class="cell g" style="left:796px;top:720.0px;width:29px;height:38.0px;line-height:36.0px">97</div>
<div class="cell g" style="left:825px;top:720.0px;width:29px;height:38.0px;line-height:36.0px">68</div>
<div class="cell g" style="left:854px;top:720.0px;width:30px;height:38.0px;line-height:36.0px">70</div>
<div class="cell g" style="left:884px;top:720.0px;width:29px;height:38.0px;line-height:36.0px">20</div>
<div class="cell g" style="left:913px;top:720.0px;width:29px;height:38.0px;line-height:36.0px">43</div>
<div class="cell g" style="left:942px;top:720.0px;width:30px;height:38.0px;line-height:36.0px">9</div>
<div class="cell w" style="left:972px;top:720.0px;width:33px;height:38.0px;line-height:36.0px">0</div>
<div class="cell w" style="left:1005px;top:720.0px;width:43px;height:38.0px;line-height:36.0px">0</div>
<div class="cell w" style="left:1048px;top:720.0px;width:44px;height:38.0px;line-height:36.0px">0</div>
<div class="cell w" style="left:1092px;top:720.0px;width:44px;height:38.0px;line-height:36.0px">0</div>
<div class="cell w" style="left:1136px;top:720.0px;width:46px;height:38.0px;line-height:36.0px">0</div>
<div class="cell w" style="left:1182px;top:720.0px;width:46px;height:38.0px;line-height:36.0px">0</div>
<div class="cell w" style="left:1228px;top:720.0px;width:47px;height:38.0px;line-height:36.0px">0</div>
<div class="cell w" style="left:1275px;top:720.0px;width:48px;height:38.0px;line-height:36.0px">0</div>
<div class="cell w" style="left:1323px;top:720.0px;width:46px;height:38.0px;line-height:36.0px">0</div>
<div class="cell w" style="left:1369px;top:720.0px;width:46px;height:38.0px;line-height:36.0px">0</div>
<div class="cell w" style="left:1415px;top:720.0px;width:44px;height:38.0px;line-height:36.0px">0</div>
<div class="cell w" style="left:1459px;top:720.0px;width:45px;height:38.0px;line-height:36.0px">0</div>
<div class="cell w" style="left:1504px;top:720.0px;width:46px;height:38.0px;line-height:36.0px">0</div>
<div class="cell w" style="left:1550px;top:720.0px;width:52px;height:38.0px;line-height:36.0px">0</div>
<div class="cell w" style="left:1602px;top:720.0px;width:42px;height:38.0px;line-height:36.0px">0</div>
<div class="cell t" style="left:1644px;top:720.0px;width:42px;height:38.0px;line-height:36.0px">503</div>
<div class="cell g" style="left:1686px;top:720.0px;width:39px;height:38.0px;line-height:36.0px">503</div>
<div class="cell w" style="left:1725px;top:720.0px;width:36px;height:38.0px;line-height:36.0px">0</div>
<div class="cell w" style="left:1761px;top:720.0px;width:44px;height:38.0px;line-height:36.0px">0</div>
<div class="cell w" style="left:1805px;top:720.0px;width:36px;height:38.0px;line-height:36.0px">0</div>
<div class="badge" style="top:721.0px">ERSRFR01</div>
<div class="desc" style="left:146px;top:722.0px">Referrals on the eRS Referrals for Review (RFR) list that have not been added into the PAS</div>
<div class="cell w" style="left:673px;top:758.0px;width:64px;height:38.0px;line-height:36.0px">0</div>
<div class="cell w" style="left:737px;top:758.0px;width:29px;height:38.0px;line-height:36.0px">0</div>
<div class="cell w" style="left:766px;top:758.0px;width:30px;height:38.0px;line-height:36.0px">0</div>
<div class="cell w" style="left:796px;top:758.0px;width:29px;height:38.0px;line-height:36.0px">0</div>
<div class="cell w" style="left:825px;top:758.0px;width:29px;height:38.0px;line-height:36.0px">0</div>
<div class="cell w" style="left:854px;top:758.0px;width:30px;height:38.0px;line-height:36.0px">0</div>
<div class="cell w" style="left:884px;top:758.0px;width:29px;height:38.0px;line-height:36.0px">0</div>
<div class="cell w" style="left:913px;top:758.0px;width:29px;height:38.0px;line-height:36.0px">0</div>
<div class="cell w" style="left:942px;top:758.0px;width:30px;height:38.0px;line-height:36.0px">0</div>
<div class="cell w" style="left:972px;top:758.0px;width:33px;height:38.0px;line-height:36.0px">0</div>
<div class="cell w" style="left:1005px;top:758.0px;width:43px;height:38.0px;line-height:36.0px">0</div>
<div class="cell w" style="left:1048px;top:758.0px;width:44px;height:38.0px;line-height:36.0px">0</div>
<div class="cell w" style="left:1092px;top:758.0px;width:44px;height:38.0px;line-height:36.0px">0</div>
<div class="cell w" style="left:1136px;top:758.0px;width:46px;height:38.0px;line-height:36.0px">0</div>
<div class="cell l" style="left:1182px;top:758.0px;width:46px;height:38.0px;line-height:36.0px">79</div>
<div class="cell l" style="left:1228px;top:758.0px;width:47px;height:38.0px;line-height:36.0px">52</div>
<div class="cell w" style="left:1275px;top:758.0px;width:48px;height:38.0px;line-height:36.0px">0</div>
<div class="cell w" style="left:1323px;top:758.0px;width:46px;height:38.0px;line-height:36.0px">0</div>
<div class="cell w" style="left:1369px;top:758.0px;width:46px;height:38.0px;line-height:36.0px">0</div>
<div class="cell w" style="left:1415px;top:758.0px;width:44px;height:38.0px;line-height:36.0px">0</div>
<div class="cell w" style="left:1459px;top:758.0px;width:45px;height:38.0px;line-height:36.0px">0</div>
<div class="cell w" style="left:1504px;top:758.0px;width:46px;height:38.0px;line-height:36.0px">0</div>
<div class="cell w" style="left:1550px;top:758.0px;width:52px;height:38.0px;line-height:36.0px">0</div>
<div class="cell w" style="left:1602px;top:758.0px;width:42px;height:38.0px;line-height:36.0px">0</div>
<div class="cell t" style="left:1644px;top:758.0px;width:42px;height:38.0px;line-height:36.0px">131</div>
<div class="cell w" style="left:1686px;top:758.0px;width:39px;height:38.0px;line-height:36.0px">0</div>
<div class="cell l" style="left:1725px;top:758.0px;width:36px;height:38.0px;line-height:36.0px">131</div>
<div class="cell l" style="left:1761px;top:758.0px;width:44px;height:38.0px;line-height:36.0px">131</div>
<div class="cell w" style="left:1805px;top:758.0px;width:36px;height:38.0px;line-height:36.0px">0</div>
<div class="badge" style="top:759.0px">ERS180DAY</div>
<div class="desc" style="left:146px;top:760.0px">Referrals on the eRS 180 Drop Off list that have not been added into the PAS</div>
<div id="rwhite" class="a"></div>
</body></html>
